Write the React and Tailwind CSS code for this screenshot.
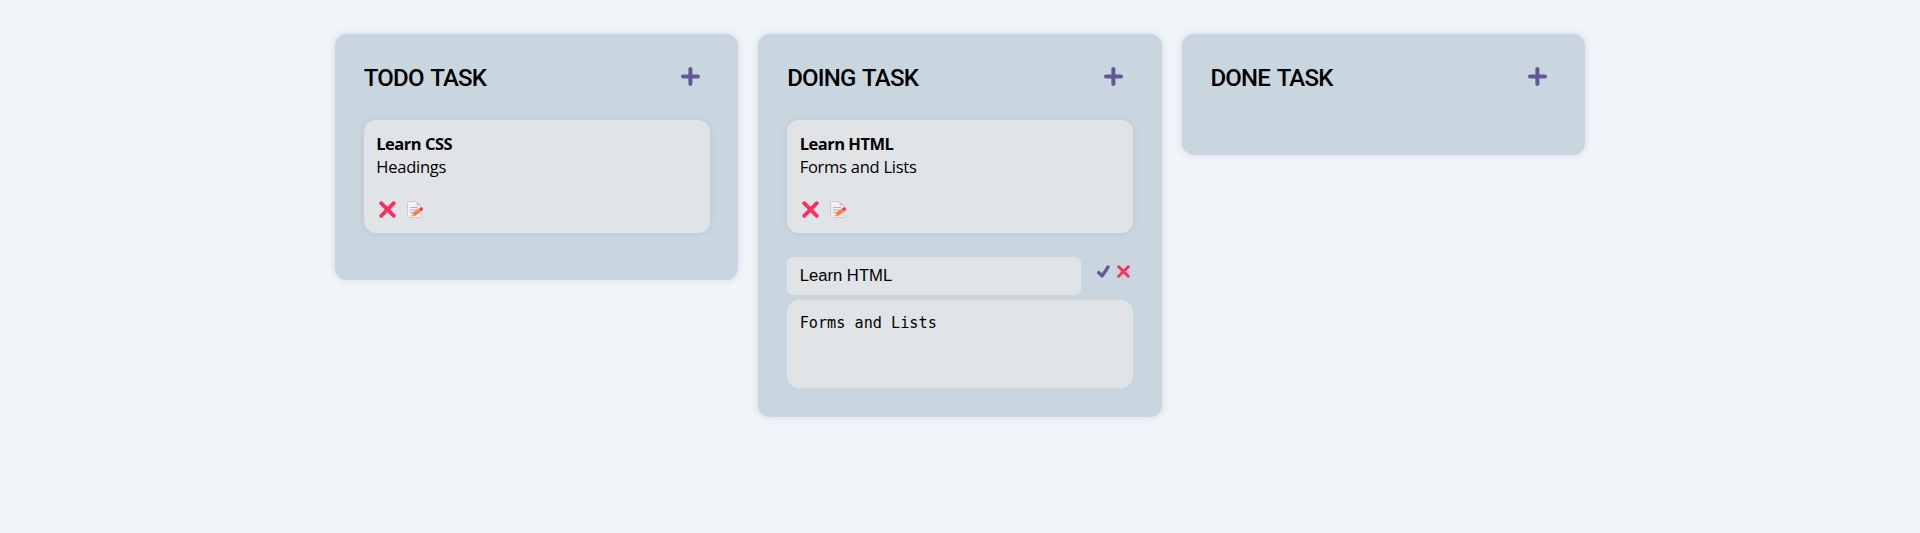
import React from "react";

function PlusIcon() {
  return (
    <svg className="h-[19px] w-[19px]" viewBox="0 0 19 19" aria-hidden="true">
      <path d="M9.4 2v15M2 9.4h15" stroke="#635994" strokeWidth="4" strokeLinecap="round" />
    </svg>
  );
}

function CrossIcon({ className }) {
  return (
    <svg className={className} viewBox="0 0 17 17" aria-hidden="true">
      <path d="M2.2 2.2 14.8 14.8M14.8 2.2 2.2 14.8" stroke="#f92f60" strokeWidth="3.8" strokeLinecap="round" />
    </svg>
  );
}

function CheckIcon() {
  return (
    <svg className="h-[13px] w-[13px]" viewBox="0 0 13 13" fill="none" aria-hidden="true">
      <path d="M1.8 7.7 5 10.8Q8.4 6.6 11 2" stroke="#635994" strokeWidth="3.5" strokeLinecap="round" strokeLinejoin="round" />
    </svg>
  );
}

function MemoIcon() {
  return (
    <svg className="h-[17px] w-[17px]" viewBox="0 0 17 17" fill="none" aria-hidden="true">
      <path d="M1.5.5h8.2l4.3 4v11a1 1 0 0 1-1 1H1.5a1 1 0 0 1-1-1v-14a1 1 0 0 1 1-1Z" fill="#f3eef8" stroke="#cdc4d6" strokeWidth=".9" />
      <path d="M9.5.5 14 4.7h-3.3a1.2 1.2 0 0 1-1.2-1.2Z" fill="#cdc4d6" />
      <path d="M3 6.5h8M3 9h7M3 11.5h3" stroke="#bab0c7" strokeWidth="1" />
      <path d="m4.2 15.6 1-3 2.2 2.4Z" fill="#f3ad61" />
      <path d="m6.6 13.6 5.8-4.1" stroke="#ff822d" strokeWidth="4" />
      <path d="m12.1 9.7.9-.7" stroke="#d3d3d3" strokeWidth="4" />
      <path d="m13.9 8.3.3-.2" stroke="#f92f60" strokeWidth="3.6" strokeLinecap="round" />
    </svg>
  );
}

function Card({ title, text }) {
  return (
    <article className="h-[113px] rounded-xl bg-[#e0e4e7] px-[12.5px] pt-3 shadow-[0_0_7px_rgba(99,89,148,0.12)]">
      <h3 className="h-[23px] font-['Open_Sans',sans-serif] text-[16.5px] leading-[23px] font-bold tracking-[-0.5px] [font-stretch:90%]">{title}</h3>
      <p className="h-[23px] font-['Open_Sans',sans-serif] text-[16.5px] leading-[23px] tracking-[-0.25px] [font-stretch:92%]">{text}</p>
      <div className="mt-[23px] ml-[2.5px] flex gap-[11px]">
        <button aria-label="Delete"><CrossIcon className="h-[17px] w-[17px]" /></button>
        <button aria-label="Edit"><MemoIcon /></button>
      </div>
    </article>
  );
}

function Column({ title, children }) {
  return (
    <section className="min-h-[121px] rounded-xl bg-[#c9d6df] py-[29px] pr-[28.5px] pl-[28.8px] shadow-[0_0_7px_rgba(99,89,148,0.2)]">
      <header className="flex h-[29px] items-start justify-between pr-[10px]">
        <h2 className="pt-px font-[Roboto,sans-serif] text-[24px] leading-[29px] font-medium tracking-[-0.8px] [word-spacing:2px]">{title}</h2>
        <button className="mt-1" aria-label="Add task"><PlusIcon /></button>
      </header>
      {children}
    </section>
  );
}

export default function App() {
  return (
    <main className="h-[533px] bg-[#f0f5f9] pt-[34px] text-black">
      <div className="mx-auto grid w-[1250px] grid-cols-3 items-start gap-5">
        <Column title="TODO TASK">
          <div className="mt-7 mb-[18px]">
            <Card title="Learn CSS" text="Headings" />
          </div>
        </Column>
        <Column title="DOING TASK">
          <div className="mt-7">
            <Card title="Learn HTML" text="Forms and Lists" />
            <form className="mt-6">
              <div className="flex items-start justify-between pr-[3.5px]">
                <input
                  className="h-[38px] w-[294px] rounded-md bg-[#e0e4e7] px-[12.5px] font-['Liberation_Sans',sans-serif] text-[16.67px]"
                  defaultValue="Learn HTML"
                />
                <div className="mt-2 flex gap-[7px]">
                  <button type="button" aria-label="Save"><CheckIcon /></button>
                  <button type="button" aria-label="Cancel"><CrossIcon className="h-[13px] w-[13px]" /></button>
                </div>
              </div>
              <textarea
                className="mt-[5px] block h-[88px] w-full resize-none rounded-xl bg-[#e0e4e7] px-[12.5px] py-[13px] font-['DejaVu_Sans_Mono',monospace] text-[15.2px] leading-5"
                defaultValue="Forms and Lists"
              />
            </form>
          </div>
        </Column>
        <Column title="DONE TASK" />
      </div>
    </main>
  );
}
